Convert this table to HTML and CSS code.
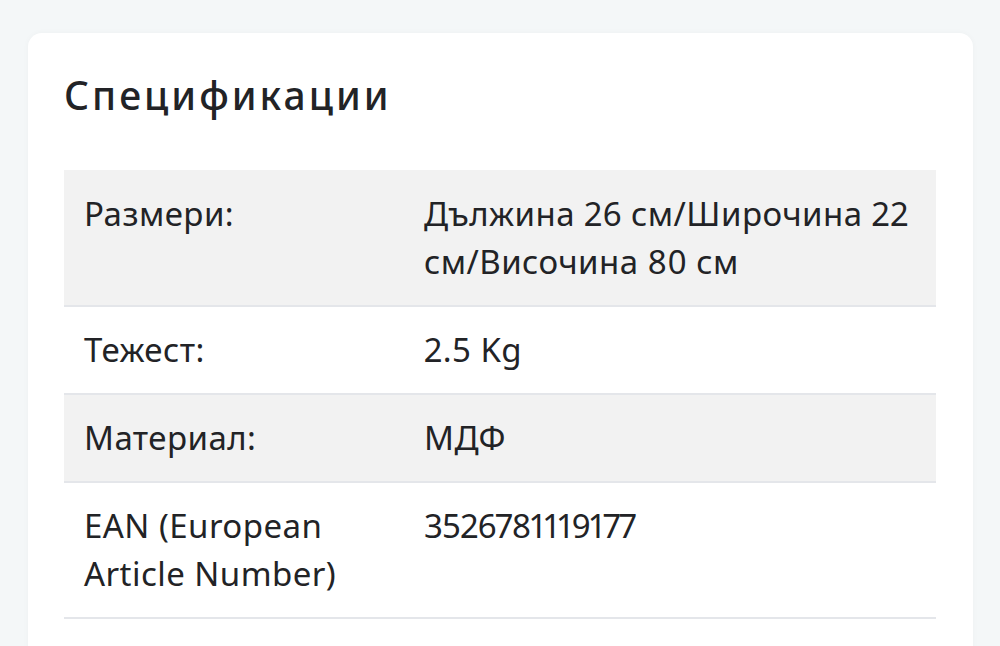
FILE: index.html
```html
<!DOCTYPE html>
<html lang="bg">
<head>
<meta charset="utf-8">
<title>Спецификации</title>
<link rel="stylesheet" href="styles.css">
</head>
<body>
<section class="card">
  <h2 class="card-title">Спецификации</h2>
  <table class="spec-table">
    <tbody>
      <tr class="spec-row shaded">
        <th class="spec-label">Размери:</th>
        <td class="spec-value">Дължина 26 см/Широчина 22 см/Височина 80 см</td>
      </tr>
      <tr class="spec-row">
        <th class="spec-label">Тежест:</th>
        <td class="spec-value">2.5 Kg</td>
      </tr>
      <tr class="spec-row shaded">
        <th class="spec-label">Материал:</th>
        <td class="spec-value">МДФ</td>
      </tr>
      <tr class="spec-row">
        <th class="spec-label">EAN (European Article Number)</th>
        <td class="spec-value spec-code">3526781119177</td>
      </tr>
    </tbody>
  </table>
</section>
</body>
</html>
```
FILE: styles.css
```css
html, body {
  margin: 0;
  padding: 0;
}
body {
  background: #f4f7f8;
  font-family: "Noto Sans", "Open Sans", sans-serif;
  color: #222326;
  padding: 33px 27px 0 28px;
  overflow: hidden;
}
.card {
  background: #ffffff;
  border-radius: 14px;
  box-shadow: 0 0 6px rgba(0, 0, 0, 0.03);
  padding: 37px 37px 60px 36px;
}
.card-title {
  margin: 0 0 50px 0;
  font-size: 39px;
  line-height: 50px;
  font-weight: 500;
  letter-spacing: 3px;
  color: #222326;
}
.spec-table {
  width: 100%;
  border-collapse: separate;
  border-spacing: 0;
  font-size: 33px;
  line-height: 48px;
  letter-spacing: 0.45px;
}
.spec-row.shaded {
  background: #f2f2f2;
}
.spec-label,
.spec-value {
  text-align: left;
  vertical-align: top;
  font-weight: 400;
  padding: 19px 20px 19px 20px;
  border-bottom: 2px solid #e4e6ea;
}
.spec-row:first-child .spec-label,
.spec-row:first-child .spec-value {
  padding-top: 20px;
}
.spec-label {
  width: 300px;
}
.spec-value {
  padding-right: 8px;
  font-variant-numeric: proportional-nums;
}
.spec-code {
  letter-spacing: -0.8px;
}
```
